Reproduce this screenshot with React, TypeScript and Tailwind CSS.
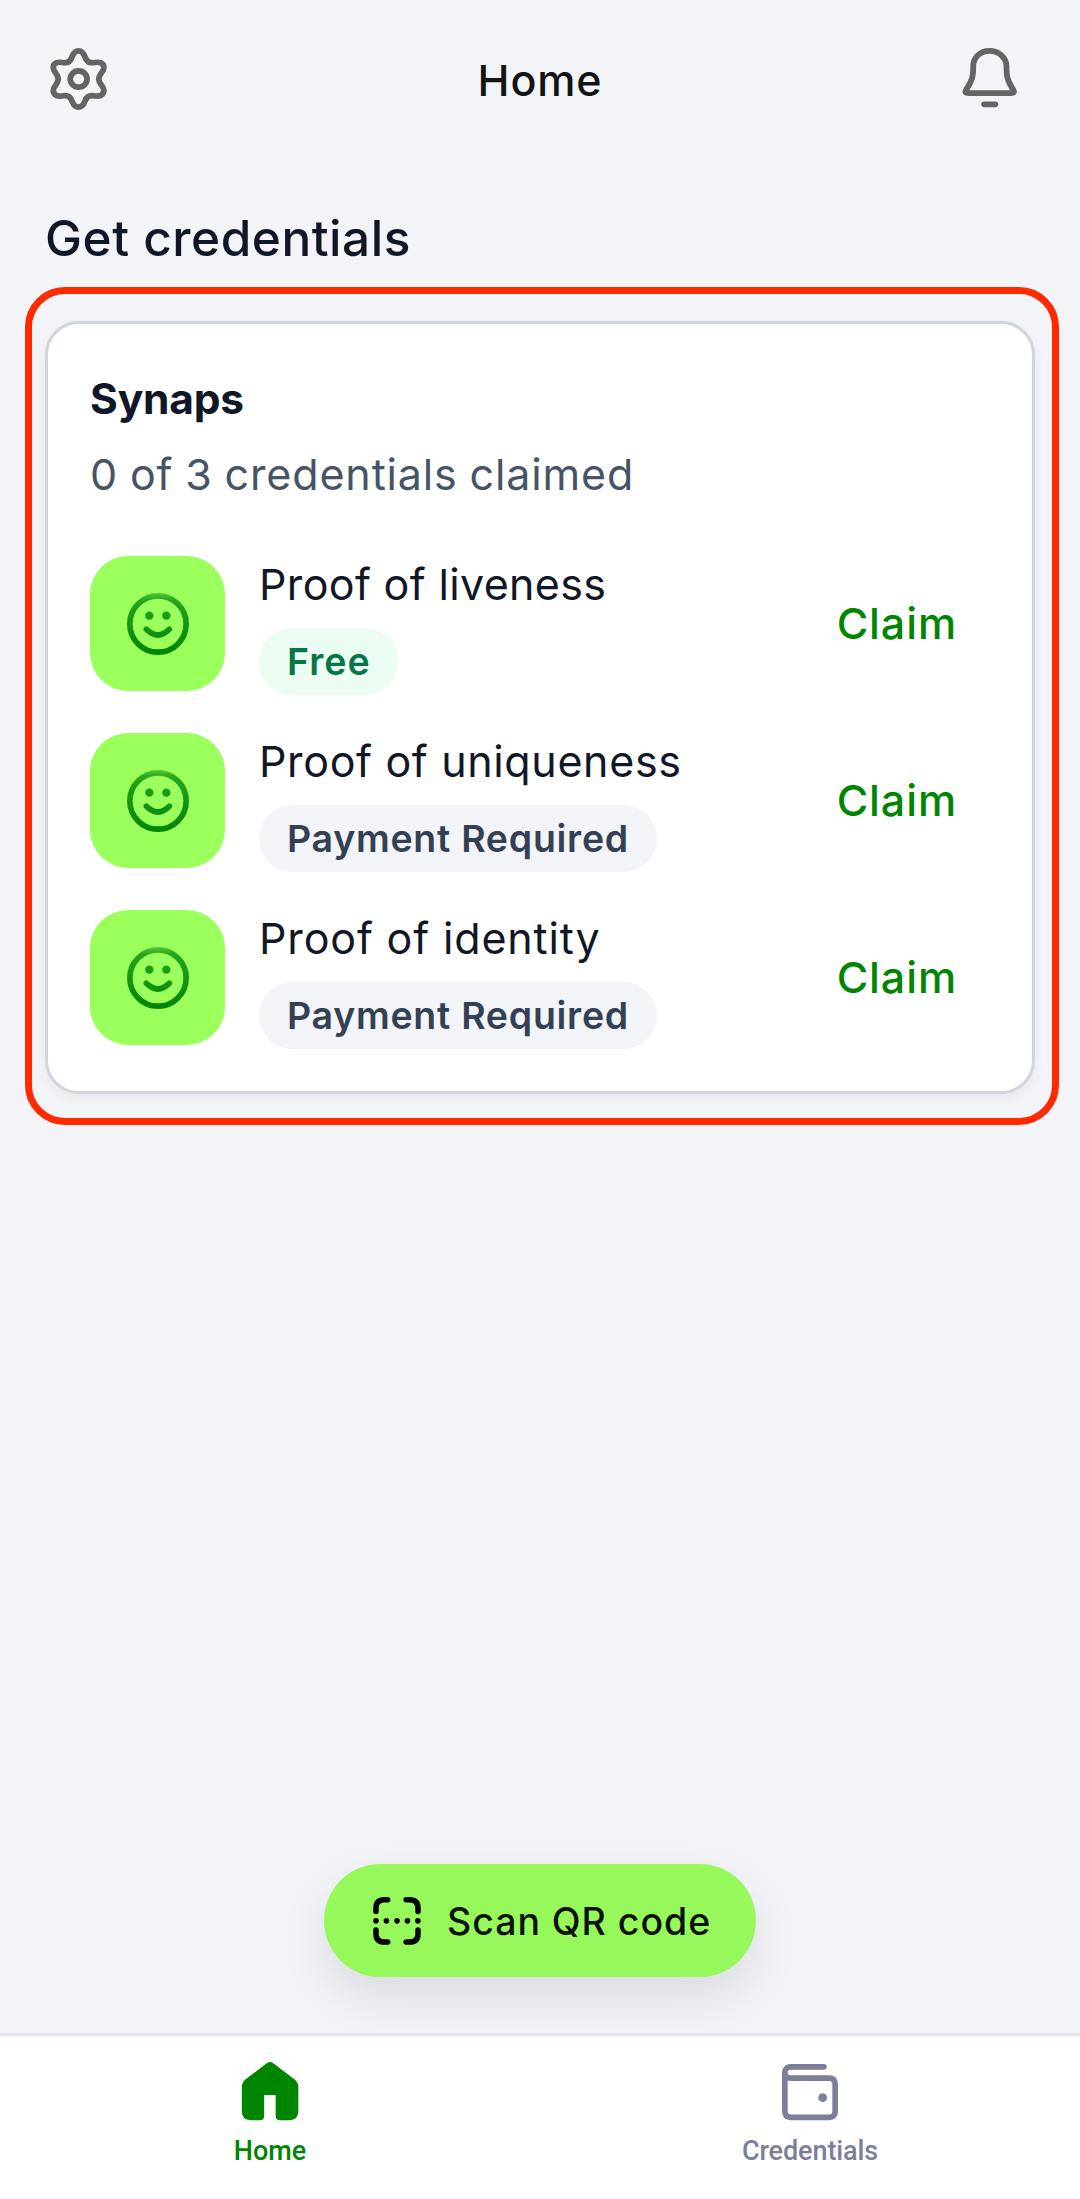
import React from "react";

function GearIcon() {
  return (
    <svg
      className="h-16 w-[59px]"
      viewBox="142 140 172 192"
      preserveAspectRatio="none"
      fill="none"
      stroke="#646464"
      strokeWidth="17"
    >
      <path d="M228 151.500C238 151.500 243 159 247 170C251 182 257 188.500 270 187C290 183 302 188 302 202C302 215 287 221 287 236C287 251 302 257 302 270C302 285 290 290 270 286C257 285 251 290 247 302C243 313 238 320.500 228 320.500C218 320.500 213 313 209 302C205 290 199 285 186 286C166 290 154.500 285 154.500 270C154.500 257 169 251 169 236C169 221 154.500 215 154.500 202C154.500 188 166 183 186 187C199 188.500 205 182 209 170C213 159 218 151.500 228 151.500Z" />
      <circle cx="228.500" cy="236" r="24.500" />
    </svg>
  );
}

function BellIcon() {
  return (
    <svg
      className="h-16 w-[59px]"
      viewBox="1220 140 172 192"
      preserveAspectRatio="none"
      fill="none"
      stroke="#646464"
      strokeWidth="17"
      strokeLinecap="round"
      strokeLinejoin="round"
    >
      <path d="M1306 151.500C1279 151.500 1258.500 172 1258.500 198C1258.500 228 1256 240 1241 263L1236.500 271C1234 276 1236 277.500 1241 278Q1245 278.500 1254 278.500H1359Q1368 278.500 1372 278C1377 277.500 1379 276 1376.500 271L1372 263C1358 240 1355.500 228 1355.500 198C1355.500 172 1333 151.500 1306 151.500Z" />
      <path d="M1290.500 312H1323" />
    </svg>
  );
}

function SmileIcon({ id }: { id: string }) {
  return (
    <svg className="h-[62px] w-[62px]" viewBox="200 217 186 186" fill="none">
      <defs>
        <linearGradient id={id} gradientUnits="userSpaceOnUse" x1="293" y1="217" x2="293" y2="403">
          <stop offset="0" stopColor="#53c636" />
          <stop offset="0.120" stopColor="#27a41a" />
          <stop offset="0.550" stopColor="#149410" />
          <stop offset="1" stopColor="#008500" />
        </linearGradient>
      </defs>
      <circle cx="293" cy="310" r="84.500" stroke={`url(#${id})`} strokeWidth="17" />
      <circle cx="267" cy="285" r="12.500" fill={`url(#${id})`} />
      <circle cx="318" cy="285" r="12.500" fill={`url(#${id})`} />
      <path d="M258 326Q293 360 327 326" stroke={`url(#${id})`} strokeWidth="17" strokeLinecap="round" />
    </svg>
  );
}

function ScanIcon() {
  return (
    <svg className="h-12 w-12" viewBox="219 170 144 145" fill="none" stroke="#000000" strokeWidth="16.500" strokeLinecap="round">
      <path d="M263 178.500H254Q227.500 178.500 227.500 203V213.500" />
      <path d="M318.500 178.500H328Q354.500 178.500 354.500 203V213.500" />
      <path d="M263 306H254Q227.500 306 227.500 281.500V270" />
      <path d="M318.500 306H328Q354.500 306 354.500 281.500V270" />
      <g fill="#000000" stroke="none">
        <circle cx="227.500" cy="242" r="8.500" />
        <circle cx="259" cy="242" r="8.500" />
        <circle cx="291" cy="242" r="8.500" />
        <circle cx="322.500" cy="242" r="8.500" />
        <circle cx="354" cy="242" r="8.500" />
      </g>
    </svg>
  );
}

function HomeIcon() {
  return (
    <svg className="h-[60px] w-[60px]" viewBox="120 123 180 180" fill="#008500">
      <path d="M202 128.500Q210 123 218 128.500L283 178Q295 187 295 201V273Q295 300.500 268 300.500H240Q227 300.500 227 287V225H192.500V287Q192.500 300.500 179 300.500H153Q125.500 300.500 125.500 273V201Q125.500 187 137 178Z" />
    </svg>
  );
}

function WalletIcon() {
  return (
    <svg className="h-[60px] w-[60px]" viewBox="240 123 180 180" fill="none" stroke="#7c7f99" strokeWidth="17" strokeLinecap="round">
      <path d="M372 140.500H272C261 140.500 254.500 148 254.500 157.500C254.500 168 261 174.500 272 174.500H387Q405.500 174.500 405.500 193V273Q405.500 292 387 292H273Q254.500 292 254.500 273V157.500" />
      <circle cx="368" cy="233" r="13" fill="#7c7f99" stroke="none" />
    </svg>
  );
}

type Credential = {
  id: string;
  title: string;
  titleClass: string;
  badge: string;
  badgeClass: string;
};

const credentials: Credential[] = [
  {
    id: "liveness",
    title: "Proof of liveness",
    titleClass: "tracking-[0.35px]",
    badge: "Free",
    badgeClass: "w-[139px] bg-[#ebfdf3] text-[#067647] tracking-[1px]",
  },
  {
    id: "uniqueness",
    title: "Proof of uniqueness",
    titleClass: "tracking-[0.65px]",
    badge: "Payment Required",
    badgeClass: "w-[398px] bg-[#f2f4f8] text-[#344054] tracking-[0.72px]",
  },
  {
    id: "identity",
    title: "Proof of identity",
    titleClass: "tracking-[0.85px]",
    badge: "Payment Required",
    badgeClass: "w-[398px] bg-[#f2f4f8] text-[#344054] tracking-[0.72px]",
  },
];

function CredentialRow({ item }: { item: Credential }) {
  return (
    <li className="flex h-[139px] items-start">
      <div className="flex h-[135px] w-[135px] shrink-0 items-center justify-center rounded-[38px] bg-[#9bff5c]">
        <SmileIcon id={item.id} />
      </div>
      <div className="ml-[34px] flex-1">
        <p className={`pt-px text-[43px] leading-[54px] text-[#101828] ${item.titleClass}`}>{item.title}</p>
        <span
          className={`mt-[17px] flex h-[67px] items-center whitespace-nowrap rounded-full pl-7 pt-px text-[37.5px] font-semibold leading-none ${item.badgeClass}`}
        >
          {item.badge}
        </span>
      </div>
      <button className="mr-[33px] flex h-[135px] items-center text-[43px] font-medium leading-none tracking-[0.9px] text-[#008500]">
        Claim
      </button>
    </li>
  );
}

export default function App() {
  return (
    <div className="flex h-[2199px] w-[1080px] flex-col overflow-hidden bg-[#f2f4f8] font-['Inter',sans-serif]">
      <header className="grid h-[158px] grid-cols-[1fr_auto_1fr] items-center">
        <div className="pl-[49px]">
          <GearIcon />
        </div>
        <h1 className="pt-[3px] text-[43px] font-medium leading-none tracking-[0.9px] text-[#141414]">Home</h1>
        <div className="flex justify-end pr-[61px]">
          <BellIcon />
        </div>
      </header>

      <h2 className="ml-[45px] mt-[50px] text-[49.5px] font-medium leading-[60px] tracking-[0.53px] text-[#101828]">
        Get credentials
      </h2>

      <div className="ml-[25px] mt-[19px] h-[838px] w-[1034px] rounded-[40px] border-[7px] border-[#ff2a00] px-[13px] pt-[27px]">
        <section className="h-[773px] w-[990px] rounded-[34px] border-[3px] border-[#cfd5df] bg-white px-[42px] pt-12 shadow-[0_4px_12px_rgba(16,24,40,0.06)]">
          <h3 className="text-[42.5px] font-bold leading-[54px] tracking-[-0.2px] text-[#101828]">Synaps</h3>
          <p className="mt-[21px] text-[43px] leading-[54px] tracking-[0.85px] text-[#475467] [word-spacing:-1px]">
            0 of 3 credentials claimed
          </p>
          <ul className="mt-[55px] flex flex-col gap-[38px]">
            {credentials.map((item) => (
              <CredentialRow key={item.id} item={item} />
            ))}
          </ul>
        </section>
      </div>

      <div className="flex flex-1 items-end justify-center pb-14">
        <button className="flex h-[113px] w-[432px] items-center whitespace-nowrap rounded-full bg-[#96f85b] pl-[49px] text-[37.5px] font-medium tracking-[0.95px] text-[#0c110a] shadow-[0_20px_48px_rgba(0,0,0,0.1)]">
          <ScanIcon />
          <span className="ml-[26px] pt-[3px]">Scan QR code</span>
        </button>
      </div>

      <nav className="relative grid h-[166px] grid-cols-2 border-t-[3px] border-[#e3e4ee] bg-white font-['Roboto',sans-serif] text-[27px] font-medium leading-[32px]">
        <div className="flex flex-col items-center pt-[25px] text-[#008500]">
          <HomeIcon />
          <span className="mt-3.5">Home</span>
        </div>
        <div className="flex flex-col items-center pt-[25px] text-[#7c7f99]">
          <WalletIcon />
          <span className="mt-3.5 tracking-[-0.1px]">Credentials</span>
        </div>
      </nav>
    </div>
  );
}
